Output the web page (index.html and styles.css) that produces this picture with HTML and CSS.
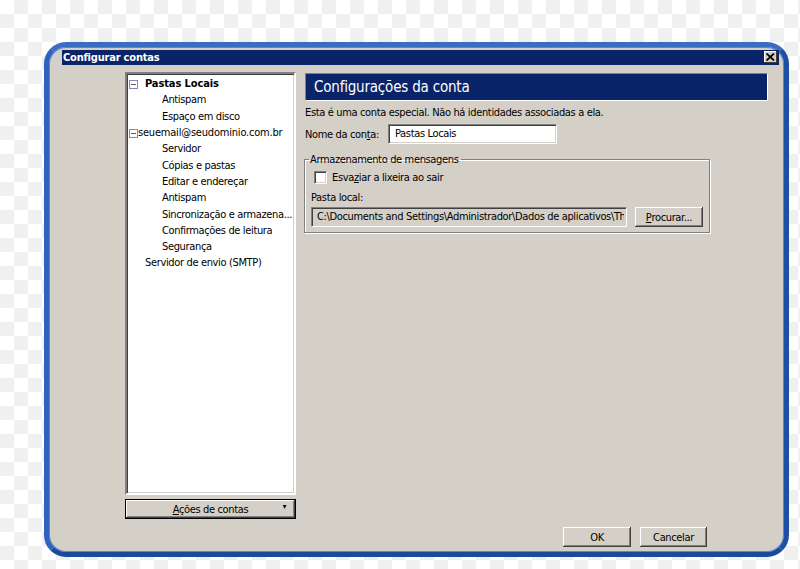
FILE: index.html
```html
<!DOCTYPE html>
<html lang="pt">
<head>
<meta charset="utf-8">
<title>Configurar contas</title>
<link rel="stylesheet" href="styles.css">
</head>
<body>
<div class="frame">
  <div class="titlebar">
    <span class="title">Configurar contas</span>
    <span class="close">
      <svg width="9" height="8" viewBox="0 0 9 8"><path d="M0.5 0.5 L8 7.5 M8 0.5 L0.5 7.5" stroke="#000" stroke-width="1.8"/></svg>
    </span>
  </div>
  <div class="main">
    <div class="leftcol">
      <div class="tree">
        <div class="node top"><span class="minus"></span><b>Pastas Locais</b></div>
        <div class="node child">Antispam</div>
        <div class="node child">Espaço em disco</div>
        <div class="node top tight"><span class="minus"></span>seuemail@seudominio.com.br</div>
        <div class="node child">Servidor</div>
        <div class="node child">Cópias e pastas</div>
        <div class="node child">Editar e endereçar</div>
        <div class="node child">Antispam</div>
        <div class="node child">Sincronização e armazena...</div>
        <div class="node child">Confirmações de leitura</div>
        <div class="node child">Segurança</div>
        <div class="node plain">Servidor de envio (SMTP)</div>
      </div>
      <div class="btn actions"><span><u>A</u>ções de contas</span><span class="arrow">▾</span></div>
    </div>
    <div class="rightcol">
      <div class="header">Configurações da conta</div>
      <div class="note">Esta é uma conta especial. Não há identidades associadas a ela.</div>
      <div class="namerow">
        <span class="label">Nome da con<u>t</u>a:</span>
        <div class="input name">Pastas Locais</div>
      </div>
      <fieldset class="group">
        <legend>Armazenamento de mensagens</legend>
        <div class="checkrow"><span class="checkbox"></span><span>Esva<u>z</u>iar a lixeira ao sair</span></div>
        <div class="plabel">Pasta local:</div>
        <div class="pathrow">
          <div class="input path"><span class="pathtext">C:\Documents and Settings\Administrador\Dados de aplicativos\Th</span></div>
          <div class="btn browse"><u>P</u>rocurar...</div>
        </div>
      </fieldset>
    </div>
  </div>
  <div class="footer">
    <div class="btn ok">OK</div>
    <div class="btn cancel">Cancelar</div>
  </div>
</div>
</body>
</html>
```
FILE: styles.css
```css
html, body {
  margin: 0;
  padding: 0;
}
body {
  width: 800px;
  height: 569px;
  overflow: hidden;
  background-color: #fff;
  background-image: conic-gradient(#f0f0f0 25%, #fff 0 50%, #f0f0f0 0 75%, #fff 0);
  background-size: 28px 28px;
  font-family: Tahoma, "DejaVu Sans Condensed", "Liberation Sans", sans-serif;
  font-size: 11px;
  letter-spacing: -0.35px;
  color: #000;
}
.frame {
  box-sizing: border-box;
  margin: 42px 0 0 44px;
  width: 745px;
  height: 515px;
  border: 5px solid #1f55b0;
  border-color: #3a6cc4 #1d4fa6 #1b4a9c #2e62bd;
  border-radius: 22px;
  background: #d4d0c8;
  display: flex;
  flex-direction: column;
  box-shadow: inset 0 0 0 1px #5b86d0;
}
.titlebar {
  margin: 3px 5px 0 13px;
  height: 15px;
  background: #0a246a;
  display: flex;
  align-items: center;
  justify-content: space-between;
}
.title {
  color: #fff;
  font-weight: bold;
  padding-left: 1px;
  letter-spacing: -0.2px;
}
.close {
  width: 13px;
  height: 12px;
  margin: -2px 2px 0 0;
  background: #d4d0c8;
  box-shadow: inset -1px -1px 0 #404040, inset 1px 1px 0 #fff;
  display: flex;
  align-items: center;
  justify-content: center;
}
.main {
  display: flex;
  margin: 7px 0 0 76px;
  height: 447px;
}
.leftcol {
  width: 171px;
  display: flex;
  flex-direction: column;
}
.tree {
  box-sizing: border-box;
  height: 424px;
  background: #fff;
  border: 2px solid;
  border-color: #808080 #fff #fff #808080;
  box-shadow: inset 1px 1px 0 #404040, inset -1px -1px 0 #d4d0c8;
  padding-top: 2px;
}
.node {
  height: 16.3px;
  line-height: 16px;
  white-space: nowrap;
  display: flex;
  align-items: center;
}
.top { padding-left: 2px; }
.top b { margin-left: 7px; letter-spacing: -0.1px; }
.tight { letter-spacing: -0.2px; }
.child { padding-left: 35px; }
.plain { padding-left: 18px; }
.minus {
  box-sizing: border-box;
  width: 9px;
  height: 9px;
  border: 1px solid #8a86b8;
  background: linear-gradient(#5a5a5a, #5a5a5a) center / 5px 1px no-repeat, #fff;
  flex: none;
}
.btn {
  box-sizing: border-box;
  background: #d4d0c8;
  box-shadow: inset -1px -1px 0 #404040, inset 1px 1px 0 #fff, inset -2px -2px 0 #808080;
  display: flex;
  align-items: center;
  justify-content: center;
  height: 20px;
}
.actions {
  margin-top: 4px;
  height: 20px;
  border: 1px solid #000;
  position: relative;
}
.actions .arrow {
  position: absolute;
  right: 9px;
  top: 2px;
  font-size: 8px;
}
.rightcol {
  margin-left: 9px;
  width: 463px;
  display: flex;
  flex-direction: column;
}
.header {
  box-sizing: border-box;
  height: 28px;
  margin-top: 1px;
  background: #0a246a;
  border: 1px solid #fff;
  border-color: #808080 #fff #fff #808080;
  color: #fff;
  font-size: 15px;
  letter-spacing: -0.2px;
  padding-left: 8px;
  display: flex;
  align-items: center;
}
.note {
  margin-top: 5px;
  height: 14px;
  line-height: 14px;
}
.namerow {
  display: flex;
  align-items: center;
  margin-top: 4px;
}
.namerow .label { width: 83px; }
.input {
  box-sizing: border-box;
  height: 20px;
  border: 1px solid;
  border-color: #808080 #fff #fff #808080;
  box-shadow: inset 1px 1px 0 #404040, inset -1px -1px 0 #d4d0c8;
  background: #fff;
  padding: 0 6px;
  line-height: 18px;
  white-space: nowrap;
  overflow: hidden;
}
.name { width: 169px; }
.group {
  box-sizing: border-box;
  width: 405px;
  margin: 9px 0 0 -1px;
  padding: 4px 6px 5px 6px;
  border: 1px solid #808080;
  box-shadow: 1px 1px 0 #fff, inset 1px 1px 0 #fff;
}
.group legend {
  padding: 0 2px 0 1px;
  margin-left: -2px;
  line-height: 13px;
}
.checkrow {
  display: flex;
  align-items: center;
  height: 14px;
}
.checkbox {
  box-sizing: border-box;
  width: 13px;
  height: 13px;
  margin: 0 5px 0 3px;
  background: #fff;
  border: 1px solid;
  border-color: #808080 #fff #fff #808080;
  box-shadow: inset 1px 1px 0 #404040, inset -1px -1px 0 #d4d0c8;
}
.plabel {
  margin-top: 7px;
  height: 13px;
  line-height: 13px;
}
.pathrow {
  display: flex;
  margin-top: 3px;
  gap: 8px;
}
.path {
  width: 316px;
  background: #d4d0c8;
  padding: 0 2px 0 5px;
}
.pathtext {
  display: block;
  overflow: hidden;
  white-space: nowrap;
}
.browse { width: 68px; }
.footer {
  display: flex;
  justify-content: flex-end;
  gap: 9px;
  margin: 8px 77px 0 0;
}
.ok { width: 68px; }
.cancel { width: 67px; }
u { text-decoration: underline; text-underline-offset: 1px; }
```
